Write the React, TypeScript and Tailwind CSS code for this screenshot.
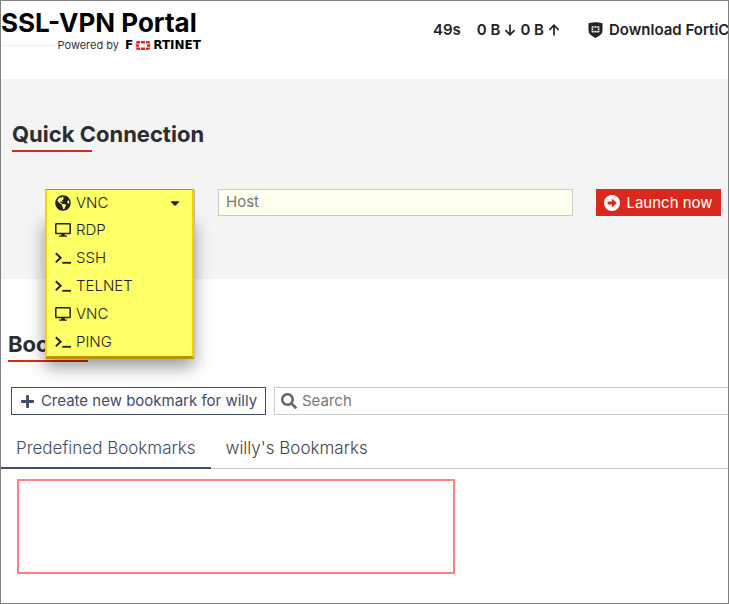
import React, { useState } from 'react';
import {
  FaCaretDown,
  FaGlobeAmericas,
  FaPlus,
  FaSearch,
} from 'react-icons/fa';

type IconProps = { className?: string };

const DesktopIcon: React.FC<IconProps> = ({ className }) => (
  <svg viewBox="0 0 16 14" className={className} fill="none" aria-hidden="true">
    <rect x="0.8" y="0.8" width="14.4" height="9.8" rx="0.6" stroke="currentColor" strokeWidth="1.5" />
    <path d="M6.6 10.6h2.8l0.5 1.8h2v1.4H4.1v-1.4h2z" fill="currentColor" />
  </svg>
);

const TerminalIcon: React.FC<IconProps> = ({ className }) => (
  <svg viewBox="0 0 16 14" className={className} fill="none" stroke="currentColor" aria-hidden="true">
    <path d="M0.8 2.2l4.8 4.6L0.8 11.4" strokeWidth="2" />
    <path d="M7.2 11.8H16" strokeWidth="1.8" />
  </svg>
);

const ArrowIcon: React.FC<IconProps> = ({ className }) => (
  <svg viewBox="0 0 12 12" className={className} fill="none" stroke="currentColor" strokeWidth="1.7" aria-hidden="true">
    <path d="M6 0.5v10M1.4 6.2L6 10.8l4.6-4.6" />
  </svg>
);

const LaunchIcon: React.FC<IconProps> = ({ className }) => (
  <svg viewBox="0 0 16 16" className={className} aria-hidden="true">
    <circle cx="8" cy="8" r="8" fill="#fff" />
    <path d="M3.6 6.6H7.8V3.4L13 8L7.8 12.6V9.4H3.6z" fill="#da291c" />
  </svg>
);

const ShieldIcon: React.FC<IconProps> = ({ className }) => (
  <svg viewBox="0 0 14 16" className={className} aria-hidden="true">
    <path d="M0 1.2Q7-0.8 14 1.2V8.6Q14 13 7 16Q0 13 0 8.6Z" fill="#222" />
    <path d="M3 5.2Q3 4.2 4 4.2H5.2V5.8H3zM5.9 4.2H8.1V5.8H5.9zM8.8 4.2H10Q11 4.2 11 5.2V5.8H8.8zM3 6.5H4.8V8.1H3zM9.2 6.5H11V8.1H9.2zM3 8.8H5.2V10.4H4Q3 10.4 3 9.4zM5.9 8.8H8.1V10.4H5.9zM8.8 8.8H11V9.4Q11 10.4 10 10.4H8.8z" fill="#fff" />
  </svg>
);

// Red grid mark that stands for the "O" in the wordmark
const GridMark: React.FC<IconProps> = ({ className }) => (
  <svg viewBox="0 0 13 8" className={className} fill="#da291c" aria-hidden="true">
    <path d="M0 2.2Q0 0 2.2 0H3.8V2.2zM4.6 0H8.4V2.2H4.6zM9.2 0H10.8Q13 0 13 2.2H9.2zM0 2.9H2.9V5.1H0zM10.1 2.9H13V5.1H10.1zM0 5.8H3.8V8H2.2Q0 8 0 5.8zM4.6 5.8H8.4V8H4.6zM9.2 5.8H13Q13 8 10.8 8H9.2z" />
  </svg>
);

const protocols = [
  { label: 'RDP', icon: DesktopIcon },
  { label: 'SSH', icon: TerminalIcon },
  { label: 'TELNET', icon: TerminalIcon },
  { label: 'VNC', icon: DesktopIcon },
  { label: 'PING', icon: TerminalIcon },
];

const tabs = ['Predefined Bookmarks', "willy's Bookmarks"];

const SectionTitle: React.FC<{ children: React.ReactNode }> = ({ children }) => (
  <div>
    <h2 className="text-[22px] leading-8 font-bold text-[#2b2d2e]">{children}</h2>
    <div className="h-0.5 w-20 bg-[#da291c]" />
  </div>
);

const Header: React.FC = () => (
  <header className="flex h-[78px] justify-between overflow-hidden bg-white">
    <div className="w-[200px] shrink-0 pt-1.5">
      <h1 className="text-[26px] leading-8 font-bold whitespace-nowrap text-black">
        SSL-VPN Portal
      </h1>
      <div className="flex h-3 items-center whitespace-nowrap">
        <div className="h-px flex-1 bg-[#eeeeee]" />
        <span className="pr-1.5 pl-0.5 text-[11px] leading-3 text-[#333]">Powered by</span>
        <span className="flex items-center font-['DejaVu_Sans'] text-[12px] leading-3 font-bold text-black">
          F
          <GridMark className="mx-px h-[9px] w-[18px]" />
          RTINET
        </span>
      </div>
    </div>
    <div className="flex w-[295px] shrink-0 items-center self-start overflow-hidden pt-[17px] text-[15px] leading-6 font-semibold whitespace-nowrap text-[#222]">
      <span className="mr-4">49s</span>
      <span>0 B</span>
      <ArrowIcon className="mx-1 size-3 shrink-0" />
      <span>0 B</span>
      <ArrowIcon className="ml-1 size-3 shrink-0 rotate-180" />
      <a href="#download" className="ml-7 flex items-center gap-1.5">
        <ShieldIcon className="h-4 w-[15px] shrink-0" />
        Download FortiC
      </a>
    </div>
  </header>
);

const ProtocolSelect: React.FC = () => {
  const [open, setOpen] = useState(true);
  const [selected, setSelected] = useState('VNC');

  return (
    <div className="relative w-[150px] shrink-0 border-r border-[#bbbbbb] text-[15px] font-light text-[#222]">
      <button
        type="button"
        aria-haspopup="listbox"
        aria-expanded={open}
        onClick={() => setOpen(!open)}
        className="relative z-20 flex h-[27px] w-full items-center gap-[5px] border-x-2 border-t border-x-[#ffcc00] border-t-[#b99300] bg-[#ffff66] px-2"
      >
        <FaGlobeAmericas className="size-4" />
        {selected}
        <FaCaretDown className="mr-0.5 ml-auto size-3.5" />
      </button>
      {open && (
        <ul
          role="listbox"
          aria-label="Connection type"
          className="absolute top-[27px] left-0 z-10 w-full border-x-2 border-b-3 border-x-[#ffcc00] border-b-[#b99300] bg-[#ffff66] shadow-[1px_0_0_#bbbbbb,0_8px_16px_rgba(0,0,0,0.4)]"
        >
          {protocols.map(({ label, icon: Icon }) => (
            <li
              key={label}
              role="option"
              aria-selected={label === selected}
              onClick={() => {
                setSelected(label);
                setOpen(false);
              }}
              className="flex h-7 items-center gap-[5px] px-2"
            >
              <Icon className="h-3.5 w-4" />
              {label}
            </li>
          ))}
        </ul>
      )}
    </div>
  );
};

const App: React.FC = () => {
  const [activeTab, setActiveTab] = useState(tabs[0]);

  return (
    <div className="min-h-screen overflow-hidden border border-[#808080] bg-white font-['Inter',sans-serif]">
      <Header />

      {/* Quick connection */}
      <section className="h-[200px] bg-[#f4f4f4] pt-[39px] pr-[7px] pl-[11px]">
        <SectionTitle>Quick Connection</SectionTitle>
        <form className="mt-[37px] flex gap-[23px] pl-[33px]" onSubmit={(e) => e.preventDefault()}>
          <ProtocolSelect />
          <input
            type="text"
            aria-label="Host"
            placeholder="Host"
            className="h-[27px] min-w-0 flex-1 border border-[#cccccc] bg-[#ffffee] px-[7px] pb-0.5 text-[15px] outline-none placeholder:text-[#777]"
          />
          <button
            type="submit"
            className="flex h-[27px] w-[125px] shrink-0 items-center justify-center gap-1.5 bg-[#da291c] pt-px text-[15px] whitespace-nowrap text-white"
          >
            <LaunchIcon className="size-4" />
            Launch now
          </button>
        </form>
      </section>

      {/* Bookmarks */}
      <section>
        <div className="pt-[49px] pl-[7px]">
          <SectionTitle>Bookmarks</SectionTitle>
        </div>
        <div className="mt-[25px] flex gap-2 pl-2.5">
          <button
            type="button"
            className="flex h-7 w-[255px] shrink-0 items-center justify-center gap-1.5 border border-[#3f4c6b] text-[15px] whitespace-nowrap text-[#3f4c6b]"
          >
            <FaPlus className="size-[15px]" />
            Create new bookmark for willy
          </button>
          <label className="flex h-7 min-w-0 flex-1 items-center gap-[5px] border border-r-0 border-[#cccccc] pl-1.5">
            <FaSearch className="size-4 text-[#666]" />
            <input
              type="search"
              aria-label="Search"
              placeholder="Search"
              className="min-w-0 flex-1 text-[15px] outline-none placeholder:text-[#777]"
            />
          </label>
        </div>
        <div role="tablist" className="mt-3 flex h-[42px] border-b border-[#cccccc]">
          {tabs.map((tab) => (
            <button
              key={tab}
              type="button"
              role="tab"
              aria-selected={tab === activeTab}
              onClick={() => setActiveTab(tab)}
              className={
                tab === activeTab
                  ? '-mb-px border-b-2 border-[#3f4c6b] px-[15px] pt-1 text-[17px] font-light text-[#3f4c6b]'
                  : '-mb-px border-b-2 border-transparent px-[15px] pt-1 text-[17px] font-light text-[#444]'
              }
            >
              {tab}
            </button>
          ))}
        </div>
        <div role="tabpanel" aria-label={activeTab} className="px-4 py-2.5">
          <div className="h-[95px] w-[438px] border-2 border-[#ff8080]" />
        </div>
      </section>
    </div>
  );
};

export default App;
